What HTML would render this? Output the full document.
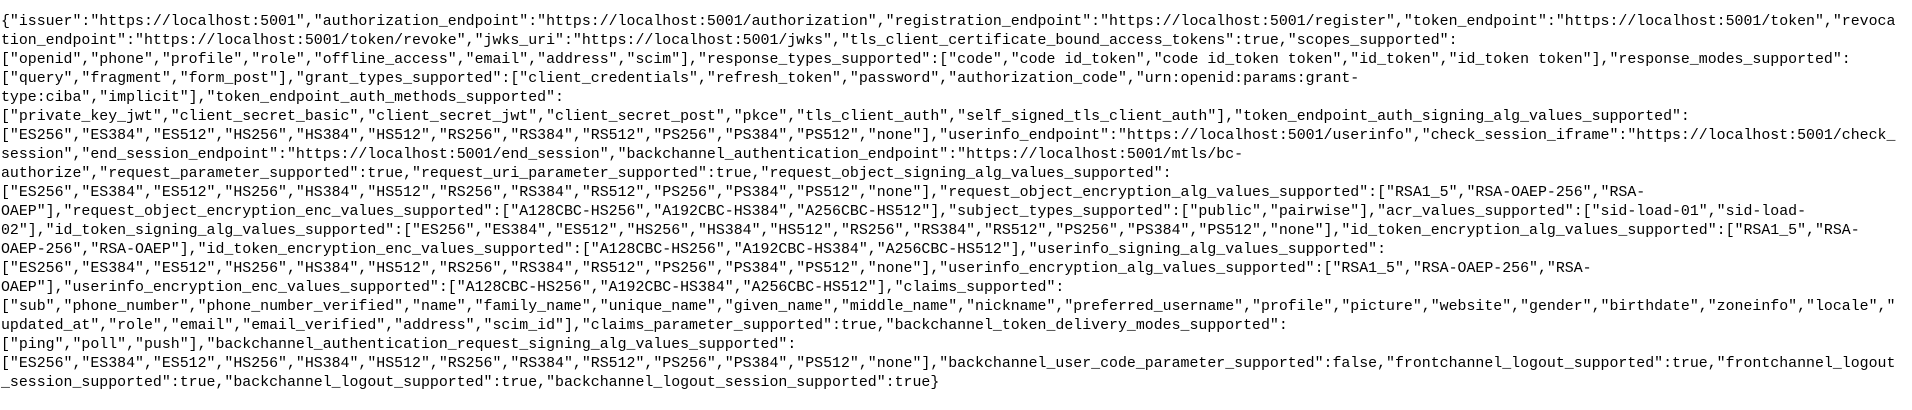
<!DOCTYPE html>
<html><head><meta charset="utf-8"><style>
html,body{margin:0;padding:0;background:#fff;width:1912px;height:410px;overflow:hidden}
pre{margin:0;padding:13px 0 0 1px;font-family:"Liberation Mono",monospace;font-size:14.9px;line-height:19px;color:#000;white-space:pre}
</style></head><body><pre>{"issuer":"https://localhost:5001","authorization_endpoint":"https://localhost:5001/authorization","registration_endpoint":"https://localhost:5001/register","token_endpoint":"https://localhost:5001/token","revoca
tion_endpoint":"https://localhost:5001/token/revoke","jwks_uri":"https://localhost:5001/jwks","tls_client_certificate_bound_access_tokens":true,"scopes_supported":
["openid","phone","profile","role","offline_access","email","address","scim"],"response_types_supported":["code","code id_token","code id_token token","id_token","id_token token"],"response_modes_supported":
["query","fragment","form_post"],"grant_types_supported":["client_credentials","refresh_token","password","authorization_code","urn:openid:params:grant-
type:ciba","implicit"],"token_endpoint_auth_methods_supported":
["private_key_jwt","client_secret_basic","client_secret_jwt","client_secret_post","pkce","tls_client_auth","self_signed_tls_client_auth"],"token_endpoint_auth_signing_alg_values_supported":
["ES256","ES384","ES512","HS256","HS384","HS512","RS256","RS384","RS512","PS256","PS384","PS512","none"],"userinfo_endpoint":"https://localhost:5001/userinfo","check_session_iframe":"https://localhost:5001/check_
session","end_session_endpoint":"https://localhost:5001/end_session","backchannel_authentication_endpoint":"https://localhost:5001/mtls/bc-
authorize","request_parameter_supported":true,"request_uri_parameter_supported":true,"request_object_signing_alg_values_supported":
["ES256","ES384","ES512","HS256","HS384","HS512","RS256","RS384","RS512","PS256","PS384","PS512","none"],"request_object_encryption_alg_values_supported":["RSA1_5","RSA-OAEP-256","RSA-
OAEP"],"request_object_encryption_enc_values_supported":["A128CBC-HS256","A192CBC-HS384","A256CBC-HS512"],"subject_types_supported":["public","pairwise"],"acr_values_supported":["sid-load-01","sid-load-
02"],"id_token_signing_alg_values_supported":["ES256","ES384","ES512","HS256","HS384","HS512","RS256","RS384","RS512","PS256","PS384","PS512","none"],"id_token_encryption_alg_values_supported":["RSA1_5","RSA-
OAEP-256","RSA-OAEP"],"id_token_encryption_enc_values_supported":["A128CBC-HS256","A192CBC-HS384","A256CBC-HS512"],"userinfo_signing_alg_values_supported":
["ES256","ES384","ES512","HS256","HS384","HS512","RS256","RS384","RS512","PS256","PS384","PS512","none"],"userinfo_encryption_alg_values_supported":["RSA1_5","RSA-OAEP-256","RSA-
OAEP"],"userinfo_encryption_enc_values_supported":["A128CBC-HS256","A192CBC-HS384","A256CBC-HS512"],"claims_supported":
["sub","phone_number","phone_number_verified","name","family_name","unique_name","given_name","middle_name","nickname","preferred_username","profile","picture","website","gender","birthdate","zoneinfo","locale","
updated_at","role","email","email_verified","address","scim_id"],"claims_parameter_supported":true,"backchannel_token_delivery_modes_supported":
["ping","poll","push"],"backchannel_authentication_request_signing_alg_values_supported":
["ES256","ES384","ES512","HS256","HS384","HS512","RS256","RS384","RS512","PS256","PS384","PS512","none"],"backchannel_user_code_parameter_supported":false,"frontchannel_logout_supported":true,"frontchannel_logout
_session_supported":true,"backchannel_logout_supported":true,"backchannel_logout_session_supported":true}</pre></body></html>
